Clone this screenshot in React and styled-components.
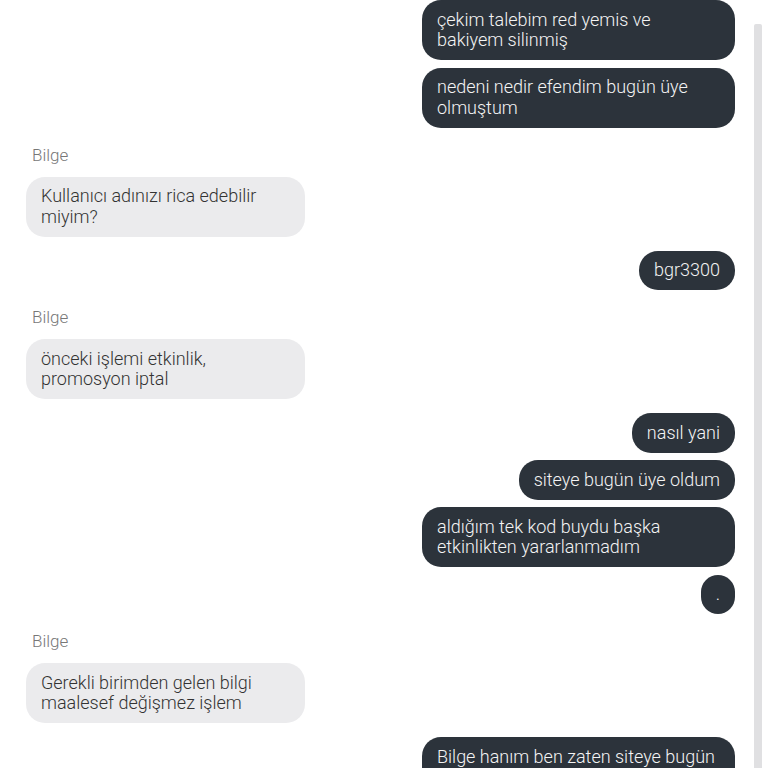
import React from "react";
import styled, { createGlobalStyle } from "styled-components";

const Global = createGlobalStyle`
  html, body { margin: 0; padding: 0; background: #ffffff; }
  body { font-family: Roboto, "Noto Sans", "Liberation Sans", sans-serif; }
`;

const Page = styled.div`
  display: flex;
  flex-direction: row;
  width: 768px;
  height: 768px;
  overflow: hidden;
  background: #ffffff;
`;

const Chat = styled.div`
  flex: 1;
  display: flex;
  flex-direction: column;
  gap: 14px;
  padding: 0 19px 0 26px;
  overflow: hidden;
`;

const ScrollTrack = styled.div`
  width: 8px;
  margin: 24px 6px 0 0;
  background: #e0e0e2;
  border-radius: 2px 2px 0 0;
`;

const Group = styled.div`
  display: flex;
  flex-direction: column;
  align-items: ${(p) => (p.$mine ? "flex-end" : "flex-start")};
  gap: 7.5px;
`;

const SenderName = styled.div`
  margin: 3px 0 12px 6px;
  font-size: 17px;
  font-weight: 300;
  line-height: 20px;
  color: #777777;
`;

const Bubble = styled.div`
  box-sizing: border-box;
  max-width: ${(p) => (p.$mine ? "313px" : "279px")};
  width: ${(p) => (p.$mine ? "auto" : "279px")};
  padding: 9.5px 15px;
  border-radius: 19px;
  font-size: 18px;
  font-weight: 300;
  line-height: 20.5px;
  background: ${(p) => (p.$mine ? "#2c333b" : "#ebebed")};
  color: ${(p) => (p.$mine ? "#f4f4f4" : "#333333")};
  word-wrap: break-word;
`;

const messages = [
  { mine: true, texts: ["çekim talebim red yemis ve bakiyem silinmiş", "nedeni nedir efendim bugün üye olmuştum"] },
  { mine: false, name: "Bilge", texts: ["Kullanıcı adınızı rica edebilir miyim?"] },
  { mine: true, texts: ["bgr3300"] },
  { mine: false, name: "Bilge", texts: ["önceki işlemi etkinlik, promosyon iptal"] },
  { mine: true, texts: ["nasıl yani", "siteye bugün üye oldum", "aldığım tek kod buydu başka etkinlikten yararlanmadım", "."] },
  { mine: false, name: "Bilge", texts: ["Gerekli birimden gelen bilgi maalesef değişmez işlem"] },
  { mine: true, texts: ["Bilge hanım ben zaten siteye bugün üye oldum"] },
];

export default function App() {
  return (
    <>
      <Global />
      <Page>
        <Chat>
          {messages.map((g, i) => (
            <div key={i}>
              {g.name && <SenderName>{g.name}</SenderName>}
              <Group $mine={g.mine}>
                {g.texts.map((t, j) => (
                  <Bubble key={j} $mine={g.mine}>
                    {t}
                  </Bubble>
                ))}
              </Group>
            </div>
          ))}
        </Chat>
        <ScrollTrack />
      </Page>
    </>
  );
}
